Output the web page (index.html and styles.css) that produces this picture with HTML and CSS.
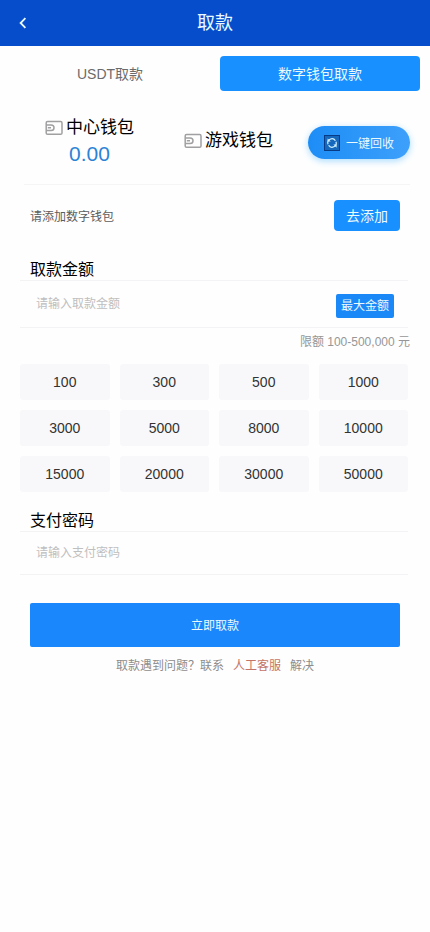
FILE: index.html
```html
<!DOCTYPE html>
<html lang="zh-CN">
<head>
<meta charset="utf-8">
<meta name="viewport" content="width=device-width, initial-scale=1">
<title>取款</title>
<link rel="stylesheet" href="styles.css">
</head>
<body>
<header class="header">
  <button class="back" type="button" aria-label="返回">
    <svg width="8" height="12" viewBox="0 0 8 12" fill="none" stroke="currentColor" stroke-width="1.8"><path d="M6.4 1.2 1.6 6l4.8 4.8"/></svg>
  </button>
  <h1 class="title">取款</h1>
</header>
<main>
  <nav class="tabs">
    <button class="tab" type="button">USDT取款</button>
    <button class="tab tab-active" type="button">数字钱包取款</button>
  </nav>
  <section class="wallets">
    <div class="wallet">
      <div class="wallet-name">
        <svg class="wallet-icon" width="18" height="16" viewBox="0 0 18 16" fill="none" stroke="currentColor" stroke-width="1.5"><rect x="1.2" y="1.5" width="15.8" height="12.8" rx="1.4"/><path d="M1.2 5h5a2.8 2.8 0 0 1 0 5.6h-5M2.8 7.8H6"/></svg>
        <span>中心钱包</span>
      </div>
      <div class="balance">0.00</div>
    </div>
    <div class="wallet">
      <div class="wallet-name">
        <svg class="wallet-icon" width="18" height="16" viewBox="0 0 18 16" fill="none" stroke="currentColor" stroke-width="1.5"><rect x="1.2" y="1.5" width="15.8" height="12.8" rx="1.4"/><path d="M1.2 5h5a2.8 2.8 0 0 1 0 5.6h-5M2.8 7.8H6"/></svg>
        <span>游戏钱包</span>
      </div>
    </div>
    <button class="recycle" type="button">
      <svg width="16" height="16" viewBox="0 0 16 16" fill="none"><rect x=".5" y=".5" width="15" height="15" fill="#1668bd" stroke="#073b85"/><path d="M4 9.2a4.1 4.1 0 0 1 7.4-3.4M12 6.8a4.1 4.1 0 0 1-7.4 3.4" stroke="#d3f3ff" stroke-width="1.2"/><path d="M3.6 3.4v3.2h3.2zM12.6 12.8V9.6H9.4z" fill="#d3f3ff"/></svg>
      <span>一键回收</span>
    </button>
  </section>
  <section class="add-row">
    <span>请添加数字钱包</span>
    <button class="add" type="button">去添加</button>
  </section>
  <form class="form">
    <label class="label" for="amount">取款金额</label>
    <div class="field field-amount">
      <input class="input" id="amount" type="text" inputmode="decimal" placeholder="请输入取款金额">
      <button class="max" type="button">最大金额</button>
    </div>
    <p class="limit">限额 100-500,000 元</p>
    <div class="amounts">
      <button class="amount" type="button">100</button>
      <button class="amount" type="button">300</button>
      <button class="amount" type="button">500</button>
      <button class="amount" type="button">1000</button>
      <button class="amount" type="button">3000</button>
      <button class="amount" type="button">5000</button>
      <button class="amount" type="button">8000</button>
      <button class="amount" type="button">10000</button>
      <button class="amount" type="button">15000</button>
      <button class="amount" type="button">20000</button>
      <button class="amount" type="button">30000</button>
      <button class="amount" type="button">50000</button>
    </div>
    <label class="label" for="password">支付密码</label>
    <div class="field">
      <input class="input" id="password" type="password" placeholder="请输入支付密码">
    </div>
    <button class="submit" type="submit">立即取款</button>
  </form>
  <p class="help"><span>取款遇到问题？联系</span><a class="service" href="#">人工客服</a><span>解决</span></p>
</main>
</body>
</html>
```
FILE: styles.css
```css
* {
  box-sizing: border-box;
}

body {
  margin: 0;
  background: #fefefe;
  color: #000;
  font-family: "Liberation Sans", "Noto Sans CJK SC", sans-serif;
  font-size: 14px;
}

button,
input {
  margin: 0;
  padding: 0;
  border: 0;
  background: none;
  color: inherit;
  font: inherit;
}

button {
  padding-bottom: 2px;
  cursor: pointer;
}

.header {
  display: grid;
  grid-template-columns: 46px 1fr 46px;
  height: 46px;
  background: #064dcc;
  color: #e9fbff;
}

.back {
  display: flex;
  align-items: center;
  justify-content: center;
  padding: 0;
}

.title {
  margin: 0;
  font-size: 18px;
  font-weight: 400;
  line-height: 46px;
  text-align: center;
}

.tabs {
  display: grid;
  grid-template-columns: 1fr 1fr;
  gap: 10px;
  padding: 10px;
}

.tab {
  height: 35px;
  border-radius: 4px;
  color: #6b6b6b;
}

.tab-active {
  background: #1890ff;
  color: #eafaff;
}

.wallets {
  display: flex;
  align-items: center;
  height: 84px;
  margin: 0 20px 0 24px;
  padding-left: 21px;
  border-bottom: 1px solid #f5f5f5;
}

.wallet {
  padding-bottom: 3px;
  white-space: nowrap;
}

.wallet + .wallet {
  margin-left: 50px;
}

.wallet-name {
  display: flex;
  align-items: center;
  gap: 3px;
  font-size: 17px;
  line-height: 26px;
}

.wallet-icon {
  flex: none;
  color: #a0a0a2;
}

.balance {
  color: #2b83d6;
  font-size: 21px;
  line-height: 26px;
  text-align: center;
}

.recycle {
  display: flex;
  align-items: center;
  justify-content: center;
  gap: 6px;
  width: 102px;
  height: 33px;
  margin-left: auto;
  padding: 0;
  border-radius: 17px;
  background: linear-gradient(90deg, #1d8df6, #3da0fb);
  box-shadow: 0 2px 7px #a9dcff;
  color: #eafaff;
  font-size: 12px;
}

.add-row {
  display: flex;
  align-items: center;
  justify-content: space-between;
  padding: 15px 30px;
  color: #5c5c5c;
  font-size: 12px;
}

.add {
  width: 66px;
  height: 31px;
  border-radius: 4px;
  background: #1890ff;
  color: #eafaff;
  font-size: 14px;
}

.form {
  padding: 14px 20px 0;
}

.label {
  display: block;
  padding-left: 10px;
  font-size: 16px;
  line-height: 20px;
}

.field {
  display: flex;
  align-items: center;
  height: 44px;
  margin-right: 2px;
  padding: 0 14px 0 16px;
  border: solid #f3f3f5;
  border-width: 1px 0;
}

.field-amount {
  height: 48px;
}

.input {
  flex: 1;
  min-width: 0;
  height: 40px;
  outline: 0;
  font-size: 12px;
}

.input::placeholder {
  color: #bfbfbf;
}

.max {
  width: 58px;
  height: 24px;
  margin-top: 3px;
  border-radius: 2px;
  background: #1b88f7;
  color: #eafaff;
  font-size: 12px;
}

.limit {
  margin: 0;
  color: #969696;
  font-size: 12px;
  line-height: 28px;
  text-align: right;
}

.amounts {
  display: grid;
  grid-template-columns: repeat(4, 1fr);
  gap: 10px;
  margin: 8px 2px 19px 0;
}

.amount {
  height: 36px;
  padding: 0;
  border-radius: 3px;
  background: #f8f8fa;
  color: #333;
}

.submit {
  display: block;
  width: calc(100% - 20px);
  height: 44px;
  margin: 28px 10px 0;
  border-radius: 2px;
  background: #1a88fc;
  color: #eafaff;
  font-size: 12px;
}

.help {
  display: flex;
  justify-content: center;
  gap: 9px;
  margin: 0;
  color: #8d8d8d;
  font-size: 12px;
  line-height: 38px;
}

.service {
  color: #c47466;
  text-decoration: none;
}
```
